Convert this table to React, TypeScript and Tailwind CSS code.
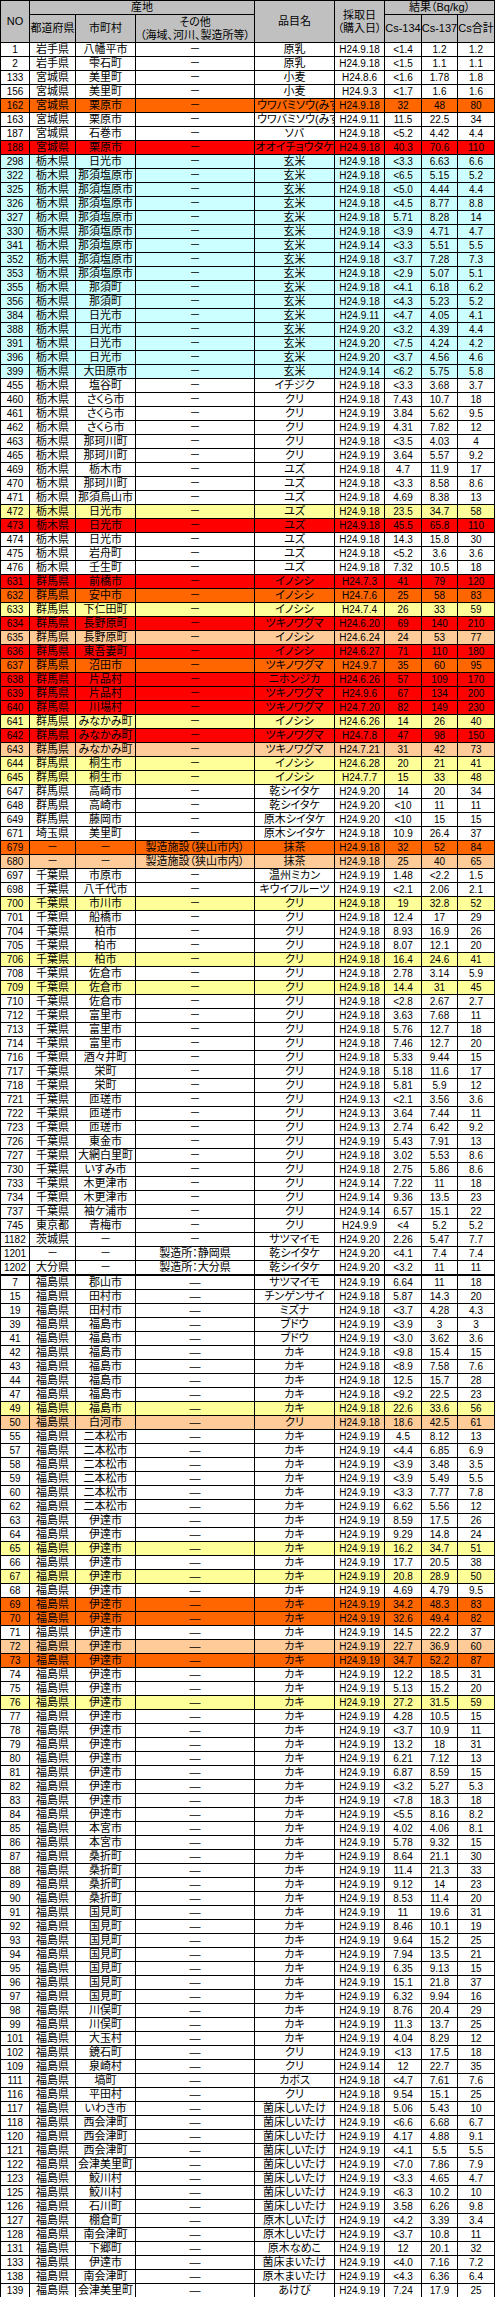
const COLS = "grid grid-cols-[29px_46px_60px_119px_80px_50px_37px_36px_37px]";

type Row = [string, string, string, string, string, string, string, string, string, string];

const BG: Record<string, string> = {
  w: "bg-white",
  o: "bg-[#FF6600]",
  r: "bg-[#FF0000]",
  y: "bg-[#FFFF99]",
  p: "bg-[#FFCC99]",
  c: "bg-[#CCFFFF]",
};

const D = "－";
const L = "―";

const rows: Row[] = [
  ["1", "岩手県", "八幡平市", D, "原乳", "H24.9.18", "<1.4", "1.2", "1.2", "w"],
  ["2", "岩手県", "雫石町", D, "原乳", "H24.9.18", "<1.5", "1.1", "1.1", "w"],
  ["133", "宮城県", "美里町", D, "小麦", "H24.8.6", "<1.6", "1.78", "1.8", "w"],
  ["156", "宮城県", "美里町", D, "小麦", "H24.9.3", "<1.7", "1.6", "1.6", "w"],
  ["162", "宮城県", "栗原市", D, "ウワバミソウ(みず)", "H24.9.18", "32", "48", "80", "o"],
  ["163", "宮城県", "栗原市", D, "ウワバミソウ(みず)", "H24.9.11", "11.5", "22.5", "34", "w"],
  ["187", "宮城県", "石巻市", D, "ソバ", "H24.9.18", "<5.2", "4.42", "4.4", "w"],
  ["188", "宮城県", "栗原市", D, "オオイチョウタケ", "H24.9.18", "40.3", "70.6", "110", "r"],
  ["298", "栃木県", "日光市", D, "玄米", "H24.9.18", "<3.3", "6.63", "6.6", "c"],
  ["322", "栃木県", "那須塩原市", D, "玄米", "H24.9.18", "<6.5", "5.15", "5.2", "c"],
  ["325", "栃木県", "那須塩原市", D, "玄米", "H24.9.18", "<5.0", "4.44", "4.4", "c"],
  ["326", "栃木県", "那須塩原市", D, "玄米", "H24.9.18", "<4.5", "8.77", "8.8", "c"],
  ["327", "栃木県", "那須塩原市", D, "玄米", "H24.9.18", "5.71", "8.28", "14", "c"],
  ["330", "栃木県", "那須塩原市", D, "玄米", "H24.9.18", "<3.9", "4.71", "4.7", "c"],
  ["341", "栃木県", "那須塩原市", D, "玄米", "H24.9.14", "<3.3", "5.51", "5.5", "c"],
  ["352", "栃木県", "那須塩原市", D, "玄米", "H24.9.18", "<3.7", "7.28", "7.3", "c"],
  ["353", "栃木県", "那須塩原市", D, "玄米", "H24.9.18", "<2.9", "5.07", "5.1", "c"],
  ["355", "栃木県", "那須町", D, "玄米", "H24.9.18", "<4.1", "6.18", "6.2", "c"],
  ["356", "栃木県", "那須町", D, "玄米", "H24.9.18", "<4.3", "5.23", "5.2", "c"],
  ["384", "栃木県", "日光市", D, "玄米", "H24.9.11", "<4.7", "4.05", "4.1", "c"],
  ["388", "栃木県", "日光市", D, "玄米", "H24.9.20", "<3.2", "4.39", "4.4", "c"],
  ["391", "栃木県", "日光市", D, "玄米", "H24.9.20", "<7.5", "4.24", "4.2", "c"],
  ["396", "栃木県", "日光市", D, "玄米", "H24.9.20", "<3.7", "4.56", "4.6", "c"],
  ["399", "栃木県", "大田原市", D, "玄米", "H24.9.14", "<6.2", "5.75", "5.8", "c"],
  ["455", "栃木県", "塩谷町", D, "イチジク", "H24.9.18", "<3.3", "3.68", "3.7", "w"],
  ["460", "栃木県", "さくら市", D, "クリ", "H24.9.18", "7.43", "10.7", "18", "w"],
  ["461", "栃木県", "さくら市", D, "クリ", "H24.9.19", "3.84", "5.62", "9.5", "w"],
  ["462", "栃木県", "さくら市", D, "クリ", "H24.9.19", "4.31", "7.82", "12", "w"],
  ["463", "栃木県", "那珂川町", D, "クリ", "H24.9.18", "<3.5", "4.03", "4", "w"],
  ["465", "栃木県", "那珂川町", D, "クリ", "H24.9.19", "3.64", "5.57", "9.2", "w"],
  ["469", "栃木県", "栃木市", D, "ユズ", "H24.9.18", "4.7", "11.9", "17", "w"],
  ["470", "栃木県", "那珂川町", D, "ユズ", "H24.9.18", "<3.3", "8.58", "8.6", "w"],
  ["471", "栃木県", "那須烏山市", D, "ユズ", "H24.9.18", "4.69", "8.38", "13", "w"],
  ["472", "栃木県", "日光市", D, "ユズ", "H24.9.18", "23.5", "34.7", "58", "y"],
  ["473", "栃木県", "日光市", D, "ユズ", "H24.9.18", "45.5", "65.8", "110", "r"],
  ["474", "栃木県", "日光市", D, "ユズ", "H24.9.18", "14.3", "15.8", "30", "w"],
  ["475", "栃木県", "岩舟町", D, "ユズ", "H24.9.18", "<5.2", "3.6", "3.6", "w"],
  ["476", "栃木県", "壬生町", D, "ユズ", "H24.9.18", "7.32", "10.5", "18", "w"],
  ["631", "群馬県", "前橋市", D, "イノシシ", "H24.7.3", "41", "79", "120", "r"],
  ["632", "群馬県", "安中市", D, "イノシシ", "H24.7.6", "25", "58", "83", "o"],
  ["633", "群馬県", "下仁田町", D, "イノシシ", "H24.7.4", "26", "33", "59", "y"],
  ["634", "群馬県", "長野原町", D, "ツキノワグマ", "H24.6.20", "69", "140", "210", "r"],
  ["635", "群馬県", "長野原町", D, "イノシシ", "H24.6.24", "24", "53", "77", "p"],
  ["636", "群馬県", "東吾妻町", D, "イノシシ", "H24.6.27", "71", "110", "180", "r"],
  ["637", "群馬県", "沼田市", D, "ツキノワグマ", "H24.9.7", "35", "60", "95", "o"],
  ["638", "群馬県", "片品村", D, "ニホンジカ", "H24.6.26", "57", "109", "170", "r"],
  ["639", "群馬県", "片品村", D, "ツキノワグマ", "H24.9.6", "67", "134", "200", "r"],
  ["640", "群馬県", "川場村", D, "ツキノワグマ", "H24.7.20", "82", "149", "230", "r"],
  ["641", "群馬県", "みなかみ町", D, "イノシシ", "H24.6.26", "14", "26", "40", "y"],
  ["642", "群馬県", "みなかみ町", D, "ツキノワグマ", "H24.7.8", "47", "98", "150", "r"],
  ["643", "群馬県", "みなかみ町", D, "ツキノワグマ", "H24.7.21", "31", "42", "73", "p"],
  ["644", "群馬県", "桐生市", D, "イノシシ", "H24.6.28", "20", "21", "41", "y"],
  ["645", "群馬県", "桐生市", D, "イノシシ", "H24.7.7", "15", "33", "48", "y"],
  ["647", "群馬県", "高崎市", D, "乾シイタケ", "H24.9.20", "14", "20", "34", "w"],
  ["648", "群馬県", "高崎市", D, "乾シイタケ", "H24.9.20", "<10", "11", "11", "w"],
  ["649", "群馬県", "藤岡市", D, "原木シイタケ", "H24.9.20", "<10", "15", "15", "w"],
  ["671", "埼玉県", "美里町", D, "原木シイタケ", "H24.9.18", "10.9", "26.4", "37", "w"],
  ["679", D, D, "製造施設（狭山市内）", "抹茶", "H24.9.18", "32", "52", "84", "o"],
  ["680", D, D, "製造施設（狭山市内）", "抹茶", "H24.9.18", "25", "40", "65", "p"],
  ["697", "千葉県", "市原市", D, "温州ミカン", "H24.9.19", "1.48", "<2.2", "1.5", "w"],
  ["698", "千葉県", "八千代市", D, "キウイフルーツ", "H24.9.19", "<2.1", "2.06", "2.1", "w"],
  ["700", "千葉県", "市川市", D, "クリ", "H24.9.18", "19", "32.8", "52", "y"],
  ["701", "千葉県", "船橋市", D, "クリ", "H24.9.18", "12.4", "17", "29", "w"],
  ["704", "千葉県", "柏市", D, "クリ", "H24.9.18", "8.93", "16.9", "26", "w"],
  ["705", "千葉県", "柏市", D, "クリ", "H24.9.18", "8.07", "12.1", "20", "w"],
  ["706", "千葉県", "柏市", D, "クリ", "H24.9.18", "16.4", "24.6", "41", "y"],
  ["708", "千葉県", "佐倉市", D, "クリ", "H24.9.18", "2.78", "3.14", "5.9", "w"],
  ["709", "千葉県", "佐倉市", D, "クリ", "H24.9.18", "14.4", "31", "45", "y"],
  ["710", "千葉県", "佐倉市", D, "クリ", "H24.9.18", "<2.8", "2.67", "2.7", "w"],
  ["712", "千葉県", "富里市", D, "クリ", "H24.9.18", "3.63", "7.68", "11", "w"],
  ["713", "千葉県", "富里市", D, "クリ", "H24.9.18", "5.76", "12.7", "18", "w"],
  ["714", "千葉県", "富里市", D, "クリ", "H24.9.18", "7.46", "12.7", "20", "w"],
  ["716", "千葉県", "酒々井町", D, "クリ", "H24.9.18", "5.33", "9.44", "15", "w"],
  ["717", "千葉県", "栄町", D, "クリ", "H24.9.18", "5.18", "11.6", "17", "w"],
  ["718", "千葉県", "栄町", D, "クリ", "H24.9.18", "5.81", "5.9", "12", "w"],
  ["721", "千葉県", "匝瑳市", D, "クリ", "H24.9.13", "<2.1", "3.56", "3.6", "w"],
  ["722", "千葉県", "匝瑳市", D, "クリ", "H24.9.13", "3.64", "7.44", "11", "w"],
  ["723", "千葉県", "匝瑳市", D, "クリ", "H24.9.13", "2.74", "6.42", "9.2", "w"],
  ["726", "千葉県", "東金市", D, "クリ", "H24.9.19", "5.43", "7.91", "13", "w"],
  ["727", "千葉県", "大網白里町", D, "クリ", "H24.9.18", "3.02", "5.53", "8.6", "w"],
  ["730", "千葉県", "いすみ市", D, "クリ", "H24.9.18", "2.75", "5.86", "8.6", "w"],
  ["733", "千葉県", "木更津市", D, "クリ", "H24.9.14", "7.22", "11", "18", "w"],
  ["734", "千葉県", "木更津市", D, "クリ", "H24.9.14", "9.36", "13.5", "23", "w"],
  ["737", "千葉県", "袖ケ浦市", D, "クリ", "H24.9.14", "6.57", "15.1", "22", "w"],
  ["745", "東京都", "青梅市", D, "クリ", "H24.9.9", "<4", "5.2", "5.2", "w"],
  ["1182", "茨城県", D, D, "サツマイモ", "H24.9.20", "2.26", "5.47", "7.7", "w"],
  ["1201", D, D, "製造所：静岡県", "乾シイタケ", "H24.9.20", "<4.1", "7.4", "7.4", "w"],
  ["1202", "大分県", D, "製造所：大分県", "乾シイタケ", "H24.9.20", "<3.2", "11", "11", "w"],
  ["7", "福島県", "郡山市", L, "サツマイモ", "H24.9.19", "6.64", "11", "18", "w"],
  ["15", "福島県", "田村市", L, "チンゲンサイ", "H24.9.18", "5.87", "14.3", "20", "w"],
  ["19", "福島県", "田村市", L, "ミズナ", "H24.9.18", "<3.7", "4.28", "4.3", "w"],
  ["39", "福島県", "福島市", L, "ブドウ", "H24.9.19", "<3.9", "3", "3", "w"],
  ["41", "福島県", "福島市", L, "ブドウ", "H24.9.19", "<3.0", "3.62", "3.6", "w"],
  ["42", "福島県", "福島市", L, "カキ", "H24.9.18", "<9.8", "15.4", "15", "w"],
  ["43", "福島県", "福島市", L, "カキ", "H24.9.18", "<8.9", "7.58", "7.6", "w"],
  ["44", "福島県", "福島市", L, "カキ", "H24.9.18", "12.5", "15.7", "28", "w"],
  ["47", "福島県", "福島市", L, "カキ", "H24.9.18", "<9.2", "22.5", "23", "w"],
  ["49", "福島県", "福島市", L, "カキ", "H24.9.18", "22.6", "33.6", "56", "y"],
  ["50", "福島県", "白河市", L, "クリ", "H24.9.18", "18.6", "42.5", "61", "p"],
  ["55", "福島県", "二本松市", L, "カキ", "H24.9.19", "4.5", "8.12", "13", "w"],
  ["57", "福島県", "二本松市", L, "カキ", "H24.9.19", "<4.4", "6.85", "6.9", "w"],
  ["58", "福島県", "二本松市", L, "カキ", "H24.9.19", "<3.9", "3.48", "3.5", "w"],
  ["59", "福島県", "二本松市", L, "カキ", "H24.9.19", "<3.9", "5.49", "5.5", "w"],
  ["60", "福島県", "二本松市", L, "カキ", "H24.9.19", "<3.3", "7.77", "7.8", "w"],
  ["62", "福島県", "二本松市", L, "カキ", "H24.9.19", "6.62", "5.56", "12", "w"],
  ["63", "福島県", "伊達市", L, "カキ", "H24.9.19", "8.59", "17.5", "26", "w"],
  ["64", "福島県", "伊達市", L, "カキ", "H24.9.19", "9.29", "14.8", "24", "w"],
  ["65", "福島県", "伊達市", L, "カキ", "H24.9.19", "16.2", "34.7", "51", "y"],
  ["66", "福島県", "伊達市", L, "カキ", "H24.9.19", "17.7", "20.5", "38", "w"],
  ["67", "福島県", "伊達市", L, "カキ", "H24.9.19", "20.8", "28.9", "50", "y"],
  ["68", "福島県", "伊達市", L, "カキ", "H24.9.19", "4.69", "4.79", "9.5", "w"],
  ["69", "福島県", "伊達市", L, "カキ", "H24.9.19", "34.2", "48.3", "83", "o"],
  ["70", "福島県", "伊達市", L, "カキ", "H24.9.19", "32.6", "49.4", "82", "o"],
  ["71", "福島県", "伊達市", L, "カキ", "H24.9.19", "14.5", "22.2", "37", "w"],
  ["72", "福島県", "伊達市", L, "カキ", "H24.9.19", "22.7", "36.9", "60", "p"],
  ["73", "福島県", "伊達市", L, "カキ", "H24.9.19", "34.7", "52.2", "87", "o"],
  ["74", "福島県", "伊達市", L, "カキ", "H24.9.19", "12.2", "18.5", "31", "w"],
  ["75", "福島県", "伊達市", L, "カキ", "H24.9.19", "5.13", "15.2", "20", "w"],
  ["76", "福島県", "伊達市", L, "カキ", "H24.9.19", "27.2", "31.5", "59", "y"],
  ["77", "福島県", "伊達市", L, "カキ", "H24.9.19", "4.28", "10.5", "15", "w"],
  ["78", "福島県", "伊達市", L, "カキ", "H24.9.19", "<3.7", "10.9", "11", "w"],
  ["79", "福島県", "伊達市", L, "カキ", "H24.9.19", "13.2", "18", "31", "w"],
  ["80", "福島県", "伊達市", L, "カキ", "H24.9.19", "6.21", "7.12", "13", "w"],
  ["81", "福島県", "伊達市", L, "カキ", "H24.9.19", "6.87", "8.59", "15", "w"],
  ["82", "福島県", "伊達市", L, "カキ", "H24.9.19", "<3.2", "5.27", "5.3", "w"],
  ["83", "福島県", "伊達市", L, "カキ", "H24.9.19", "<7.8", "18.3", "18", "w"],
  ["84", "福島県", "伊達市", L, "カキ", "H24.9.19", "<5.5", "8.16", "8.2", "w"],
  ["85", "福島県", "本宮市", L, "カキ", "H24.9.19", "4.02", "4.06", "8.1", "w"],
  ["86", "福島県", "本宮市", L, "カキ", "H24.9.19", "5.78", "9.32", "15", "w"],
  ["87", "福島県", "桑折町", L, "カキ", "H24.9.19", "8.64", "21.1", "30", "w"],
  ["88", "福島県", "桑折町", L, "カキ", "H24.9.19", "11.4", "21.3", "33", "w"],
  ["89", "福島県", "桑折町", L, "カキ", "H24.9.19", "9.12", "14", "23", "w"],
  ["90", "福島県", "桑折町", L, "カキ", "H24.9.19", "8.53", "11.4", "20", "w"],
  ["91", "福島県", "国見町", L, "カキ", "H24.9.19", "11", "19.6", "31", "w"],
  ["92", "福島県", "国見町", L, "カキ", "H24.9.19", "8.46", "10.1", "19", "w"],
  ["93", "福島県", "国見町", L, "カキ", "H24.9.19", "9.64", "15.2", "25", "w"],
  ["94", "福島県", "国見町", L, "カキ", "H24.9.19", "7.94", "13.5", "21", "w"],
  ["95", "福島県", "国見町", L, "カキ", "H24.9.19", "6.35", "9.13", "15", "w"],
  ["96", "福島県", "国見町", L, "カキ", "H24.9.19", "15.1", "21.8", "37", "w"],
  ["97", "福島県", "国見町", L, "カキ", "H24.9.19", "6.32", "9.94", "16", "w"],
  ["98", "福島県", "川俣町", L, "カキ", "H24.9.19", "8.76", "20.4", "29", "w"],
  ["99", "福島県", "川俣町", L, "カキ", "H24.9.19", "11.3", "13.7", "25", "w"],
  ["101", "福島県", "大玉村", L, "カキ", "H24.9.19", "4.04", "8.29", "12", "w"],
  ["102", "福島県", "鏡石町", L, "クリ", "H24.9.19", "<13", "17.5", "18", "w"],
  ["109", "福島県", "泉崎村", L, "クリ", "H24.9.14", "12", "22.7", "35", "w"],
  ["111", "福島県", "塙町", L, "カボス", "H24.9.18", "<4.7", "7.61", "7.6", "w"],
  ["116", "福島県", "平田村", L, "クリ", "H24.9.18", "9.54", "15.1", "25", "w"],
  ["117", "福島県", "いわき市", L, "菌床しいたけ", "H24.9.18", "5.06", "5.43", "10", "w"],
  ["118", "福島県", "西会津町", L, "菌床しいたけ", "H24.9.19", "<6.6", "6.68", "6.7", "w"],
  ["120", "福島県", "西会津町", L, "菌床しいたけ", "H24.9.19", "4.17", "4.88", "9.1", "w"],
  ["121", "福島県", "西会津町", L, "菌床しいたけ", "H24.9.19", "<4.1", "5.5", "5.5", "w"],
  ["122", "福島県", "会津美里町", L, "菌床しいたけ", "H24.9.19", "<7.0", "7.86", "7.9", "w"],
  ["123", "福島県", "鮫川村", L, "菌床しいたけ", "H24.9.19", "<3.3", "4.65", "4.7", "w"],
  ["125", "福島県", "鮫川村", L, "菌床しいたけ", "H24.9.19", "<6.3", "10.2", "10", "w"],
  ["126", "福島県", "石川町", L, "菌床しいたけ", "H24.9.19", "3.58", "6.26", "9.8", "w"],
  ["127", "福島県", "棚倉町", L, "原木しいたけ", "H24.9.19", "<4.2", "3.39", "3.4", "w"],
  ["128", "福島県", "南会津町", L, "原木しいたけ", "H24.9.19", "<3.7", "10.8", "11", "w"],
  ["131", "福島県", "下郷町", L, "原木なめこ", "H24.9.19", "12", "20.1", "32", "w"],
  ["133", "福島県", "伊達市", L, "菌床まいたけ", "H24.9.19", "<4.0", "7.16", "7.2", "w"],
  ["138", "福島県", "南会津町", L, "原木まいたけ", "H24.9.19", "<4.3", "6.36", "6.4", "w"],
  ["139", "福島県", "会津美里町", L, "あけび", "H24.9.19", "7.24", "17.9", "25", "w"],
];

const numCell = "flex items-center justify-center border-r border-black overflow-hidden whitespace-nowrap text-[10px]";
const jpCell = "flex items-center justify-center border-r border-black overflow-hidden whitespace-nowrap text-[11px]";
const hd = "flex flex-col items-center justify-center border-r border-b border-black overflow-hidden whitespace-nowrap text-[11px] leading-[13px]";

const DataRow = ({ r }: { r: Row }) => {
  const thick = r[0] === "1202";
  const longItem = r[4].length > 8;
  return (
    <div
      className={`${COLS} ${BG[r[9]]} border-l border-black ${
        thick ? "h-[15px] border-b-2" : "h-[14px] border-b"
      }`}
    >
      <div className={numCell}>{r[0]}</div>
      <div className={jpCell}>{r[1]}</div>
      <div className={jpCell}>{r[2]}</div>
      <div className={jpCell}>{r[3]}</div>
      <div className={longItem ? `${jpCell} !justify-start pl-[2px]` : jpCell}>{r[4]}</div>
      <div className={numCell}>{r[5]}</div>
      <div className={numCell}>{r[6]}</div>
      <div className={numCell}>{r[7]}</div>
      <div className={numCell}>{r[8]}</div>
    </div>
  );
};

export default function App() {
  return (
    <div className="w-[495px] bg-white text-black leading-none font-['Liberation_Sans','Noto_Sans_CJK_JP',sans-serif] [font-feature-settings:'palt']">
      {/* 見出し */}
      <div className={`${COLS} grid-rows-[14px_28px] bg-[#C0C0C0] border-l border-t border-black`}>
        <div className={`${hd} row-span-2`}>NO</div>
        <div className={`${hd} col-span-3`}>産地</div>
        <div className={`${hd} row-span-2`}>品目名</div>
        <div className={`${hd} row-span-2`}>
          <span>採取日</span>
          <span>（購入日）</span>
        </div>
        <div className={`${hd} col-span-3`}>結果（Bq/kg）</div>
        <div className={hd}>都道府県</div>
        <div className={hd}>市町村</div>
        <div className={hd}>
          <span>その他</span>
          <span>（海域、河川、製造所等）</span>
        </div>
        <div className={hd}>Cs-134</div>
        <div className={hd}>Cs-137</div>
        <div className={hd}>Cs合計</div>
      </div>
      {rows.map((r, i) => (
        <DataRow key={i} r={r} />
      ))}
    </div>
  );
}
